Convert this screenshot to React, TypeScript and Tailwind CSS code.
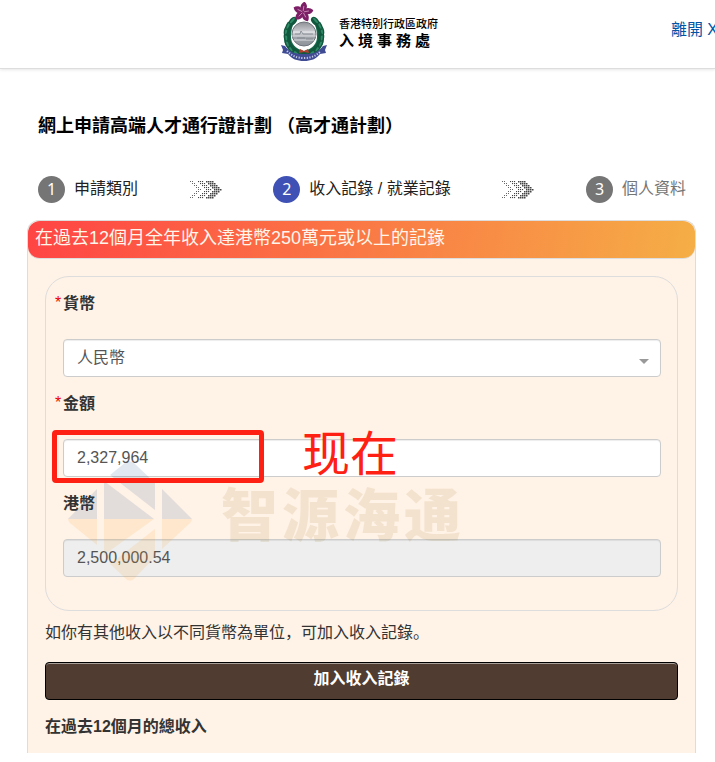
import { useState } from "react";
import type { ReactNode } from "react";
import clsx from "clsx";

const LEAVES = [
  { x: 20, y: 52, r: 100 },
  { x: 15, y: 50, r: 125 },
  { x: 10, y: 46, r: 145 },
  { x: 7, y: 41, r: 160 },
  { x: 6, y: 35, r: 175 },
  { x: 6, y: 29, r: 190 },
  { x: 8, y: 24, r: 205 },
  { x: 12, y: 19, r: 222 },
];

const Wreath = () => (
  <g>
    <path
      d="M14 17C5 20 2 29 3 37c1 8 7 16 19 18l1-6C14 47 10 41 10 35c0-6 1-11 4-18z"
      fill="#176b4d"
    />
    {LEAVES.map((leaf) => (
      <g key={leaf.y} transform={`translate(${leaf.x} ${leaf.y}) rotate(${leaf.r})`}>
        <ellipse rx="3.2" ry="4.8" fill="#12583f" />
        <ellipse cx="0.8" rx="1" ry="3.4" fill="#2f8a66" />
      </g>
    ))}
  </g>
);

const Emblem = () => (
  <svg viewBox="0 0 46 60" className="h-[60px] w-[46px]" aria-hidden="true">
    <defs>
      <linearGradient id="globe" x1="0" y1="0" x2="0" y2="1">
        <stop offset="0" stopColor="#8d9096" />
        <stop offset="0.45" stopColor="#d3d5da" />
        <stop offset="0.6" stopColor="#a3a6ad" />
        <stop offset="1" stopColor="#8e9299" />
      </linearGradient>
    </defs>
    <Wreath />
    <g transform="translate(46 0) scale(-1 1)">
      <Wreath />
    </g>
    <circle cx="23" cy="32" r="12" fill="url(#globe)" stroke="#6f747c" />
    <path d="M12 30h22M11 34h24M13 38h20" stroke="#eceef1" strokeWidth="0.8" />
    <path d="M14 32h5l1-3 2 3h10M16 36h8M25 37h7" stroke="#7b8088" strokeWidth="0.8" fill="none" />
    <g fill="#7d1f66">
      {[8, 80, 152, 224, 296].map((angle) => (
        <path
          key={angle}
          d="M0 0C-4-2-4.500-7 0-10.500 4-8 4.500-3 0 0z"
          transform={`translate(22 10) rotate(${angle})`}
        />
      ))}
    </g>
    <g stroke="#d9a9cb" strokeWidth="0.7">
      {[8, 80, 152, 224, 296].map((angle) => (
        <path key={angle} d="M0-1V-6" transform={`translate(22 10) rotate(${angle})`} />
      ))}
    </g>
    <path
      d="M0 43l4 1c5 7 11 8 19 8s14-1 19-8l4-1-2 5 1 3-6 1c-4 5-9 7-16 7S11 57 7 52l-6-1 1-3z"
      fill="#3f4c93"
    />
    <path
      d="M6 49c5 5 10 7 17 7s12-2 17-7"
      fill="none"
      stroke="#c3c9e6"
      strokeWidth="2"
      strokeDasharray="1.200 1.500"
    />
    <path d="M19 47l4 2 4-2 1 4-5-1-5 1z" fill="#b3402f" />
  </svg>
);

const CHEVRONS = [
  { x: 0, dots: 2, size: 0.9 },
  { x: 8, dots: 3, size: 1.1 },
  { x: 16, dots: 4, size: 1.5 },
];

const DottedArrows = () => (
  <svg viewBox="0 0 32 18" className="h-[18px] w-8 shrink-0" fill="#444" aria-hidden="true">
    {CHEVRONS.map((chevron) =>
      [0, 1, 2, 3, 4, 5, 6, 7, 8].map((row) =>
        Array.from({ length: chevron.dots }, (_, i) => (
          <rect
            key={`${chevron.x}-${row}-${i}`}
            x={chevron.x + (4 - Math.abs(row - 4)) * 2 + i * 2}
            y={row * 2}
            width={chevron.size}
            height={chevron.size}
          />
        ))
      )
    )}
  </svg>
);

const WatermarkLogo = () => (
  <svg viewBox="0 0 124 120" className="h-[120px] w-[124px]" aria-hidden="true">
    <g fill="#20518a" fillOpacity="0.13">
      <path d="M0 58L29 28V58z" />
      <path d="M42 14L58 1q4-2 8 1L87 22V49z" />
      <path d="M36 20L86 58H36z" />
      <path d="M94 28L124 58H94z" />
    </g>
    <g fill="#f5a623" fillOpacity="0.13">
      <path d="M0 58H29V84L2 62q-2-2-2-4z" />
      <path d="M36 58H86L36 94z" />
      <path d="M87 68V96L66 118q-4 3-8 0L42 103z" />
      <path d="M94 58H124q0 2-2 4L94 88z" />
    </g>
  </svg>
);

const Step = ({ number, label, active, muted }: { number: number; label: string; active?: boolean; muted?: boolean }) => (
  <li className="flex items-center gap-[9px]">
    <span
      className={clsx(
        "flex size-[27px] items-center justify-center rounded-full pb-[2px] font-['Noto_Sans',sans-serif] text-white",
        active ? "bg-[#3f51b5]" : "bg-[#757575]"
      )}
    >
      {number}
    </span>
    <span className={clsx("pb-[2px]", muted ? "text-[#757575]" : "text-[#212121]")}>{label}</span>
  </li>
);

const Field = ({ id, label, required, children }: { id: string; label: string; required?: boolean; children: ReactNode }) => (
  <div className="pt-4">
    <div className="flex h-[22px] items-center">
      <span className="w-2 self-start text-base leading-5 text-[#e00]">{required && "*"}</span>
      <label htmlFor={id} className="font-bold">
        {label}
      </label>
    </div>
    <div className="mt-6 ml-2">{children}</div>
  </div>
);

const inputStyle =
  "block h-[38px] w-full appearance-none rounded border border-[#ccc] px-[13px] text-[#555] shadow-[inset_0_1px_1px_rgba(0,0,0,0.075)] outline-none";

const App = () => {
  const [currency, setCurrency] = useState("CNY");
  const [amount, setAmount] = useState("2,327,964");

  return (
    <div className="bg-white font-['Liberation_Sans','Noto_Sans_CJK_SC',sans-serif] text-base leading-6 text-[#333]">
      <header className="grid h-[69px] grid-cols-[1fr_auto_1fr] items-start overflow-hidden border-b border-[#ddd] shadow-[0_1px_3px_rgba(0,0,0,0.1)]">
        <div />
        <div className="flex gap-3 pt-[2px] pl-1">
          <Emblem />
          <div className="pt-[13px] text-black">
            <p className="text-[11px] leading-[18px] font-medium">香港特別行政區政府</p>
            <p className="flex gap-1 text-[15px] leading-4 font-bold">
              {["入", "境", "事", "務", "處"].map((char) => (
                <span key={char}>{char}</span>
              ))}
            </p>
          </div>
        </div>
        <a href="#leave" className="-mr-[3px] justify-self-end pt-[18px] text-[#0054a6]">
          離開 X
        </a>
      </header>

      <main className="pr-[19px] pb-2 pl-[27px]">
        <h1 className="pt-[43px] pl-[11px] text-lg leading-7 font-bold text-black">
          網上申請高端人才通行證計劃 （高才通計劃）
        </h1>

        <ol className="mt-9 flex h-[27px] items-center justify-between pr-[10px] pl-[11px]">
          <Step number={1} label="申請類別" />
          <li>
            <DottedArrows />
          </li>
          <Step number={2} label="收入記錄 / 就業記錄" active />
          <li>
            <DottedArrows />
          </li>
          <Step number={3} label="個人資料" muted />
        </ol>

        <section className="mt-[17px] rounded-t-xl border-x border-t border-[#ddd] bg-[#fff2e6]">
          <h2 className="h-[38px] rounded-xl border-b border-[#ddd] bg-linear-[100deg,#ff4444,#f5ae46] pl-[7px] text-lg leading-[34px] text-[#fff5ea]">
            在過去12個月全年收入達港幣250萬元或以上的記錄
          </h2>

          <div className="px-[17px] pt-[17px] pb-[14px]">
            <div className="relative rounded-[24px] border border-[#ddd] pr-4 pb-[33px] pl-[9px]">
              <Field id="currency" label="貨幣" required>
                <div className="relative">
                  <select
                    id="currency"
                    value={currency}
                    onChange={(e) => setCurrency(e.target.value)}
                    className={clsx(inputStyle, "bg-white")}
                  >
                    <option value="CNY">人民幣</option>
                    <option value="HKD">港幣</option>
                  </select>
                  <svg
                    viewBox="0 0 10 5"
                    className="pointer-events-none absolute top-5 right-3 h-[5px] w-[10px]"
                    fill="#999"
                    aria-hidden="true"
                  >
                    <path d="M0 0h10L5 5z" />
                  </svg>
                </div>
              </Field>
              <Field id="amount" label="金額" required>
                <input
                  id="amount"
                  type="text"
                  value={amount}
                  onChange={(e) => setAmount(e.target.value)}
                  className={clsx(inputStyle, "bg-white")}
                />
              </Field>
              <Field id="hkd" label="港幣">
                <input id="hkd" type="text" value="2,500,000.54" readOnly className={clsx(inputStyle, "bg-[#eee]")} />
              </Field>

              <div className="pointer-events-none absolute top-[184px] left-[22px]">
                <WatermarkLogo />
              </div>
              <div className="pointer-events-none absolute top-[207px] left-[175px] flex gap-1 text-[57px] leading-[64px] font-black text-[#a07020]/12">
                {["智", "源", "海", "通"].map((char) => (
                  <span key={char}>{char}</span>
                ))}
              </div>
              <div className="pointer-events-none absolute top-[153px] left-[6px] h-[53px] w-[212px] rounded border-5 border-[#ff2014]" />
              <p className="pointer-events-none absolute top-[150px] left-[256px] text-5xl leading-[56px] text-[#ff2014]">
                现在
              </p>
            </div>

            <p className="mt-[10px]">如你有其他收入以不同貨幣為單位，可加入收入記錄。</p>
            <button
              type="button"
              className="mt-[17px] block h-[38px] w-full rounded border border-black bg-[#513c31] pb-1 font-bold text-white shadow-[inset_0_1px_0_rgba(255,255,255,0.5)]"
            >
              加入收入記錄
            </button>
            <h3 className="mt-[15px] font-bold">在過去12個月的總收入</h3>
          </div>
        </section>
      </main>
    </div>
  );
};

export default App;
